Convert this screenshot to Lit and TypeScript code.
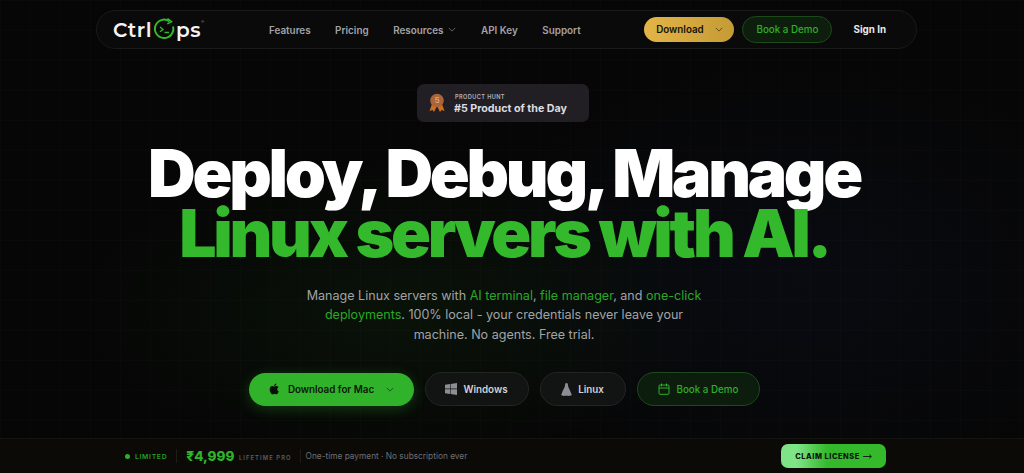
import { LitElement, html, css } from "lit";
import { customElement } from "lit/decorators.js";

const chev = html`<svg class="chev" viewBox="0 0 10 6" width="8" height="5"><path d="M1 1l4 4 4-4" fill="none" stroke="currentColor" stroke-width="1.2"/></svg>`;

@customElement("app-root")
export class AppRoot extends LitElement {
  static styles = css`
    :host { display: block; width: 1024px; height: 473px; overflow: hidden; font-family: Inter, "Liberation Sans", sans-serif; color: #fff; }
    .page {
      height: 473px; display: flex; flex-direction: column; box-sizing: border-box; padding-top: 10px;
      background-color: #060606;
      background-image:
        radial-gradient(ellipse 320px 150px at 400px 310px, rgba(52,184,44,.07), transparent 100%),
        radial-gradient(ellipse 340px 220px at 800px 280px, rgba(40,60,130,.09), transparent 100%),
        linear-gradient(rgba(255,255,255,.012) 1px, transparent 1px),
        linear-gradient(90deg, rgba(255,255,255,.012) 1px, transparent 1px);
      background-size: auto, auto, 30px 30px, 30px 30px;
    }
    nav {
      width: 821px; height: 39px; margin-left: 96px; box-sizing: border-box; border: 1px solid #191a1a; border-radius: 20px; background: #0a0a0a;
      display: flex; align-items: center; padding: 0 30px 0 16px; flex: none;
    }
    .logo { display: flex; align-items: center; font-family: Montserrat, "Open Sans", sans-serif; font-weight: 600; font-size: 20px; width: 132px; color: #f4f4f4; line-height: 1; letter-spacing: .5px; }
    .logo svg { margin: 0 -1px 0 0; flex: none; }
    .logo sup { font-size: 4px; color: #888; align-self: flex-start; margin-top: 3px; }
    .links { display: flex; align-items: center; gap: 24.5px; font-size: 9.9px; font-weight: 600; color: #a2a2a6; margin-left: 24px; }
    .links span { display: flex; align-items: center; gap: 5px; }
    .links .chev { color: #666; }
    .right { margin-left: auto; display: flex; align-items: center; }
    .dl { width: 90px; height: 25px; box-sizing: border-box; border-radius: 13px; background: linear-gradient(90deg, #e3b548, #c59b35); color: #161208; font-size: 9.8px; font-weight: 600; display: flex; align-items: center; justify-content: center; gap: 11px; }
    .dl .chev { color: #5f4b18; }
    .demo { width: 90px; height: 27px; box-sizing: border-box; margin-left: 8px; border-radius: 14px; border: 1px solid #1c4a1a; background: #0d1f0c; color: #2fae2a; font-size: 9.8px; font-weight: 500; display: flex; align-items: center; justify-content: center; }
    .signin { margin-left: 21px; font-size: 9.8px; font-weight: 700; color: #e8e8ea; }
    .hero { width: 1008px; display: flex; flex-direction: column; align-items: center; }
    .badge { margin: 35px 2px 0 0; width: 172px; height: 38px; box-sizing: border-box; flex: none; border-radius: 7px; background: #211f23; display: flex; align-items: center; padding-left: 12px; gap: 9px; }
    .badge .t { display: flex; flex-direction: column; gap: 1px; padding-top: 3px; }
    .badge small { font-size: 5.6px; font-weight: 600; letter-spacing: .4px; color: #b5b3b8; line-height: 7px; margin-left: 1px; }
    .badge b { font-size: 10.7px; font-weight: 700; color: #dcdbe0; line-height: 14px; }
    h1 { margin: 21px 0 0; font-size: 66px; font-weight: 900; letter-spacing: -3.3px; line-height: 60px; text-align: center; color: #fff; white-space: nowrap; }
    h1 em { font-style: normal; color: #34b82c; display: block; }
    p { margin: 23px 0 0; width: 400px; text-align: center; font-size: 12.55px; line-height: 19.4px; color: #a3a3a6; }
    p i { font-style: normal; color: #2aa825; }
    .cta { margin-top: 28px; display: flex; gap: 11px; align-items: center; }
    .btn { height: 34px; box-sizing: border-box; border-radius: 17px; display: flex; align-items: center; justify-content: center; font-size: 9.8px; font-weight: 600; gap: 6px; border: 1px solid #222524; background: #121413; color: #d2d2d6; }
    .mac { width: 165px; height: 33px; border: 0; background: #31b22b; color: #0b170a; gap: 7px; box-shadow: 0 3px 14px rgba(52,184,44,.28); }
    .mac .chev { color: #17571a; margin-left: 5px; }
    .win { width: 104px; }
    .lin { width: 86px; }
    .bk { width: 123px; background: #0c1c0d; border-color: #1c4a1a; color: #2fae2a; font-weight: 500; gap: 7px; }
    .bar { margin-top: auto; width: 100%; height: 35px; flex: none; box-sizing: border-box; background: #0b0a07; border-top: 1px solid #141310; display: flex; align-items: center; padding: 0 138px 0 125px; }
    .dot { width: 5px; height: 5px; border-radius: 50%; background: #2fae2a; }
    .lim { font-size: 6.8px; font-weight: 600; letter-spacing: .7px; color: #2a9e25; margin-left: 5px; }
    .sep { width: 1px; height: 14px; background: #1e1d1a; }
    .sep1 { margin-left: 9px; }
    .price { font-size: 13.5px; font-weight: 800; color: #31b22b; margin-left: 9px; font-family: Inter, "Noto Sans", sans-serif; }
    .lp { font-size: 5.8px; font-weight: 600; letter-spacing: 1.1px; color: #5f5f5f; margin: 2px 8.5px 0 4.5px; }
    .note { font-size: 8.3px; color: #6f6f72; margin-left: 4.5px; }
    .claim { margin-left: auto; width: 105px; height: 24px; border-radius: 7px; background: linear-gradient(90deg, #7fe287 0%, #7ee586 15%, #34b82c 44%, #34b82c 100%); color: #0c150b; font-size: 7.4px; font-weight: 800; letter-spacing: .55px; display: flex; align-items: center; justify-content: center; gap: 3px; }
    .claim svg { flex: none; }
  `;

  render() {
    return html`<div class="page">
      <nav>
        <div class="logo">Ctrl<svg width="25" height="25" viewBox="0 0 25 25">
          <path d="M17.5 4.4A9.2 9.2 0 1 0 21 9.5" fill="none" stroke="#34b82c" stroke-width="2"/>
          <path d="M15.5 1.5l4 3.2-4.2 2.2" fill="none" stroke="#34b82c" stroke-width="1.6"/>
          <path d="M8 10l3 2.4-3 2.4M12.5 15.500h4.500" fill="none" stroke="#34b82c" stroke-width="1.3"/>
        </svg>ps<sup>®</sup></div>
        <div class="links"><span>Features</span><span>Pricing</span><span>Resources ${chev}</span><span>API Key</span><span>Support</span></div>
        <div class="right">
          <div class="dl">Download ${chev}</div>
          <div class="demo">Book a Demo</div>
          <div class="signin">Sign In</div>
        </div>
      </nav>
      <div class="hero">
        <div class="badge">
          <svg width="16" height="20" viewBox="0 0 16 20">
            <path d="M3 11L0.5 18l3-1 1.5 2L8 13l3 6 1.500-2 3 1L13 11z" fill="#c9701f"/>
            <circle cx="8" cy="7.500" r="6.800" fill="#a9643a"/>
            <text x="8" y="10.400" font-size="8" font-weight="700" fill="#dca06e" text-anchor="middle" font-family="Inter">5</text>
          </svg>
          <div class="t"><small>PRODUCT HUNT</small><b>#5 Product of the Day</b></div>
        </div>
        <h1>Deploy, Debug, Manage<em>Linux servers with AI.</em></h1>
        <p>Manage Linux servers with <i>AI terminal</i>, <i>file manager</i>, and <i>one-click deployments</i>. 100% local - your credentials never leave your machine. No agents. Free trial.</p>
        <div class="cta">
          <div class="btn mac">
            <svg width="13" height="14" viewBox="0 0 24 24" fill="#071006"><path d="M17.05 12.54c-.03-2.6 2.12-3.85 2.22-3.91-1.21-1.77-3.09-2.01-3.76-2.04-1.6-.16-3.12.94-3.93.94-.81 0-2.06-.92-3.39-.89-1.74.03-3.35 1.01-4.25 2.57-1.81 3.14-.46 7.8 1.3 10.35.86 1.25 1.89 2.65 3.24 2.6 1.3-.05 1.79-.84 3.36-.84 1.57 0 2.01.84 3.39.81 1.4-.02 2.28-1.27 3.14-2.53.99-1.45 1.4-2.86 1.42-2.93-.03-.01-2.72-1.04-2.74-4.13zM14.47 4.9c.72-.87 1.2-2.08 1.07-3.28-1.03.04-2.28.69-3.02 1.56-.66.77-1.24 2-1.09 3.18 1.15.09 2.33-.58 3.04-1.46z"/></svg>
            Download for Mac ${chev}
          </div>
          <div class="btn win">
            <svg width="12" height="12" viewBox="0 0 12 12" fill="#8d8d94"><path d="M0 1.700l5-.7v4.600H0zM5.600.9L12 0v5.600H5.600zM0 6.200h5v4.700l-5-.7zM5.600 6.200H12V12l-6.400-.9z"/></svg>
            Windows
          </div>
          <div class="btn lin">
            <svg width="11" height="13" viewBox="0 0 11 13" fill="#8d8d94"><path d="M5.500 0C4.200 0 4 1.400 4 2.600 4 4.400 1.800 7 1.200 9.200.9 10.400.4 11 .2 11.800c0 .7 1.600.8 2.600 1.100.9-.3 4-.3 5 0 1.100-.3 3-.4 3-1.100-.3-.9-.8-1.500-1.100-2.600C9.200 7 7 4.400 7 2.600 7 1.400 6.800 0 5.500 0z"/></svg>
            Linux
          </div>
          <div class="btn bk">
            <svg width="12" height="12" viewBox="0 0 12 12" fill="none" stroke="#2fae2a" stroke-width="1"><rect x="1" y="2" width="10" height="9.300" rx="1"/><path d="M1 5h10M3.500.5v3M8.500.5v3"/></svg>
            Book a Demo
          </div>
        </div>
      </div>
      <div class="bar">
        <span class="dot"></span><span class="lim">LIMITED</span>
        <span class="sep sep1"></span>
        <span class="price">₹4,999</span><span class="lp">LIFETIME PRO</span>
        <span class="sep"></span>
        <span class="note">One-time payment · No subscription ever</span>
        <div class="claim">CLAIM LICENSE <svg width="9" height="5" viewBox="0 0 9 5" fill="none" stroke="#0c150b" stroke-width=".9"><path d="M0 2.500h8.300M6.300.6l2 1.900-2 1.900"/></svg></div>
      </div>
    </div>`;
  }
}
